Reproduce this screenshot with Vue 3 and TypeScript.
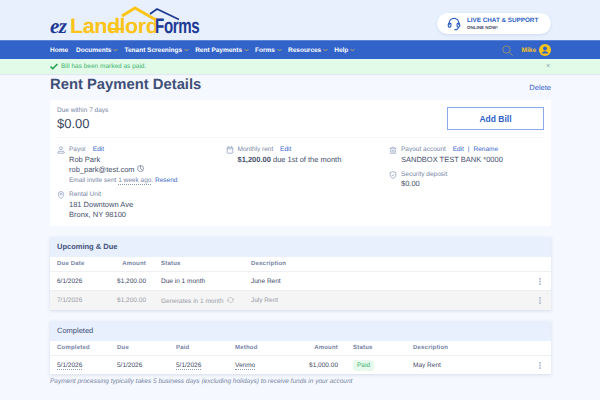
<script setup lang="ts">
const navItems = [
  { label: 'Home', caret: false },
  { label: 'Documents', caret: true },
  { label: 'Tenant Screenings', caret: true },
  { label: 'Rent Payments', caret: true },
  { label: 'Forms', caret: true },
  { label: 'Resources', caret: true },
  { label: 'Help', caret: true },
]
</script>

<template>
  <div class="page">
    <header class="top">
      <div class="logo">
        <svg class="roof" width="60" height="16" viewBox="0 0 60 16">
          <path d="M1 10 L14 2 L35 14" fill="none" stroke="#fcc419" stroke-width="3" />
          <path d="M29 8 L36 3 L58 13.500" fill="none" stroke="#1d3a94" stroke-width="1.800" />
        </svg>
        <i class="key" />
        <span class="ez">ez</span>
        <span class="landlord">Landlord</span>
        <span class="forms">Forms</span>
      </div>
      <div class="chat">
        <svg width="14" height="14" viewBox="0 0 16 16" fill="none" stroke="#2d5fc4" stroke-width="1.300">
          <path d="M2.500 9V7a5.500 5.500 0 0 1 11 0v2" />
          <rect x="1.500" y="7" width="3" height="4.600" rx="1.300" />
          <rect x="11.500" y="7" width="3" height="4.600" rx="1.300" />
          <path d="M13 11.600c0 1.900-1.500 2.900-4.500 2.900" />
        </svg>
        <div>
          <div class="chat-main">LIVE CHAT &amp; SUPPORT</div>
          <div class="chat-sub">ONLINE NOW!</div>
        </div>
      </div>
    </header>

    <nav class="nav">
      <a v-for="item in navItems" :key="item.label" class="nav-item">
        {{ item.label }}
        <svg v-if="item.caret" width="5" height="4" viewBox="0 0 5 4" fill="none" stroke="#d6b94a" stroke-width=".8"><path d="M.5 1l2 2 2-2" /></svg>
      </a>
      <div class="nav-right">
        <svg class="search" width="11" height="11" viewBox="0 0 11 11" fill="none" stroke="#b9a35c" stroke-width=".7">
          <circle cx="4.500" cy="4.500" r="3.700" /><path d="M7.200 7.200l3.400 3.400" />
        </svg>
        <span class="user">Mike</span>
        <svg width="12" height="12" viewBox="0 0 12 12">
          <circle cx="6" cy="6" r="6" fill="#fcc419" />
          <circle cx="6" cy="4.500" r="2" fill="#3263c9" />
          <path d="M2.600 9.600c.6-1.800 2-2.400 3.400-2.400s2.800.6 3.400 2.400z" fill="#3263c9" />
        </svg>
      </div>
    </nav>

    <div class="alert">
      <svg width="8" height="7" viewBox="0 0 8 7" fill="none" stroke="#1f9d4d" stroke-width="1.500"><path d="M.6 3.600l2.200 2.200L7.400 1" /></svg>
      <span>Bill has been marked as paid.</span>
      <span class="alert-close">×</span>
    </div>

    <main class="main">
      <div class="title-row">
        <h1>Rent Payment Details</h1>
        <a class="link delete">Delete</a>
      </div>

      <section class="card">
        <div class="card-top">
          <div>
            <div class="label">Due within 7 days</div>
            <div class="amount">$0.00</div>
          </div>
          <button class="add-bill">Add Bill</button>
        </div>
        <div class="info">
          <div class="col col-a">
            <div class="info-block">
              <svg class="ico" viewBox="0 0 10 10" fill="none" stroke="#7d8db5" stroke-width=".8">
                <circle cx="5" cy="2.800" r="1.800" /><path d="M1 9V7.800c0-.8.6-1.200 1.400-1.200h5.200c.8 0 1.400.4 1.400 1.200V9z" />
              </svg>
              <div>
                <div class="label">Payor <a class="link edit">Edit</a></div>
                <div class="val">Rob Park</div>
                <div class="val">rob_park@test.com
                  <svg width="7" height="7" viewBox="0 0 7 7" fill="none" stroke="#6b7690" stroke-width=".7"><circle cx="3.500" cy="3.500" r="3" /><path d="M3.500.5v3l2.200 2" /></svg>
                </div>
                <div class="label invite">Email invite sent <span class="dotted">1 week ago</span>. <a class="link">Resend</a></div>
              </div>
            </div>
            <div class="info-block">
              <svg class="ico" viewBox="0 0 10 10" fill="none" stroke="#7d8db5" stroke-width=".8">
                <path d="M5 9.500C3 7.600 1.600 6 1.600 4.100a3.400 3.400 0 0 1 6.800 0C8.400 6 7 7.600 5 9.500z" /><circle cx="5" cy="4" r="1.200" />
              </svg>
              <div>
                <div class="label">Rental Unit</div>
                <div class="val">181 Downtown Ave</div>
                <div class="val">Bronx, NY 98100</div>
              </div>
            </div>
          </div>
          <div class="col col-b">
            <div class="info-block">
              <svg class="ico" viewBox="0 0 10 10" fill="none" stroke="#7d8db5" stroke-width=".8">
                <rect x="1.500" y="1.500" width="7" height="7.500" rx=".8" /><path d="M1.500 3.500h7M3.200.5v1.500M6.800.5v1.500" />
              </svg>
              <div>
                <div class="label">Monthly rent <a class="link edit">Edit</a></div>
                <div class="val"><b>$1,200.00</b> due 1st of the month</div>
              </div>
            </div>
          </div>
          <div class="col col-c">
            <div class="info-block">
              <svg class="ico" viewBox="0 0 10 10" fill="none" stroke="#7d8db5" stroke-width=".8">
                <path d="M1 3.500L5 1l4 2.500zM2 5v3M4 5v3M6 5v3M8 5v3M1 9h8" />
              </svg>
              <div>
                <div class="label">Payout account <a class="link edit">Edit</a><span class="sep">|</span><a class="link">Rename</a></div>
                <div class="val">SANDBOX TEST BANK *0000</div>
              </div>
            </div>
            <div class="info-block">
              <svg class="ico" viewBox="0 0 10 10" fill="none" stroke="#7d8db5" stroke-width=".8">
                <path d="M5 .8l3.600 1.200v3c0 2-1.600 3.400-3.600 4.200C3 8.400 1.400 7 1.400 5V2z" /><path d="M3.400 5l1.200 1.200 2-2.200" />
              </svg>
              <div>
                <div class="label">Security deposit</div>
                <div class="val">$0.00</div>
              </div>
            </div>
          </div>
        </div>
      </section>

      <section class="panel">
        <div class="panel-title strong">Upcoming &amp; Due</div>
        <div class="row head due-grid">
          <span>Due Date</span><span class="r">Amount</span><span class="gap">Status</span><span>Description</span><span />
        </div>
        <div class="row body due-grid">
          <span>6/1/2026</span><span class="r">$1,200.00</span><span class="gap">Due in 1 month</span><span>June Rent</span>
          <svg class="dots" viewBox="0 0 2 8"><rect width="2" height="2" /><rect y="3" width="2" height="2" /><rect y="6" width="2" height="2" /></svg>
        </div>
        <div class="row body muted due-grid">
          <span>7/1/2026</span><span class="r">$1,200.00</span>
          <span class="gap">Generates in 1 month
            <svg class="cycle" width="7" height="6" viewBox="0 0 8 7" fill="none" stroke="#b0b0b0" stroke-width=".7"><path d="M1 3.200A2.800 2.800 0 0 1 6.200 2L7 3M5.800 3.200H7.400V1.400M7 3.800A2.800 2.800 0 0 1 1.800 5L1 4M2.200 3.800H.6v1.800" /></svg>
          </span>
          <span>July Rent</span>
          <svg class="dots" viewBox="0 0 2 8"><rect width="2" height="2" /><rect y="3" width="2" height="2" /><rect y="6" width="2" height="2" /></svg>
        </div>
      </section>

      <section class="panel second">
        <div class="panel-title">Completed</div>
        <div class="row head done-grid">
          <span>Completed</span><span>Due</span><span>Paid</span><span>Method</span><span class="r">Amount</span><span class="gap">Status</span><span>Description</span><span />
        </div>
        <div class="row body done-grid">
          <span><i class="dotted">5/1/2026</i></span><span>5/1/2026</span><span><i class="dotted">5/1/2026</i></span><span><i class="dotted">Venmo</i></span>
          <span class="r">$1,000.00</span><span class="gap"><em class="paid">Paid</em></span><span>May Rent</span>
          <svg class="dots" viewBox="0 0 2 8"><rect width="2" height="2" /><rect y="3" width="2" height="2" /><rect y="6" width="2" height="2" /></svg>
        </div>
      </section>
      <p class="note">Payment processing typically takes 5 business days (excluding holidays) to receive funds in your account</p>
    </main>
  </div>
</template>

<style scoped>
.page {
  width: 600px;
  height: 400px;
  overflow: hidden;
  background: #f5f8fe;
  font-family: "Liberation Sans", Arial, sans-serif;
  color: #3f4a68;
  font-size: 7.500px;
  text-rendering: geometricPrecision;
}
.top {
  height: 40px;
  box-sizing: border-box;
  background: #e8f0fd;
  display: flex;
  justify-content: space-between;
  align-items: flex-start;
  padding: 13px 49px 0 50px;
}
.logo {
  position: relative;
  display: flex;
  align-items: baseline;
  height: 22px;
  margin-top: 2px;
  font-weight: 700;
  font-size: 21px;
  line-height: 22px;
  letter-spacing: -0.500px;
}
.roof {
  position: absolute;
  left: 71px;
  top: -9px;
}
.key {
  position: absolute;
  left: 59px;
  top: 13px;
  width: 15px;
  height: 1.500px;
  background: #fcc419;
}
.ez {
  font-family: "Liberation Serif", serif;
  font-style: italic;
  color: #1d3a94;
  font-size: 21px;
  width: 20px;
}
.landlord {
  color: #fcc419;
  width: 85px;
  display: inline-block;
  transform: scaleX(1.03);
  transform-origin: left;
  white-space: nowrap;
}
.forms {
  color: #1d3a94;
  width: 44px;
  display: inline-block;
  transform: scaleX(.72);
  transform-origin: left;
}
.chat {
  width: 114px;
  height: 21px;
  box-sizing: border-box;
  background: #fff;
  border-radius: 11px;
  box-shadow: 0 1px 3px rgba(60, 90, 160, .15);
  display: flex;
  align-items: center;
  gap: 6px;
  padding-left: 10px;
}
.chat-main { color: #2d5fc4; font-size: 6.300px; font-weight: 700; }
.chat-sub { color: #3f4a68; font-size: 4.500px; font-weight: 700; margin-top: 1px; }
.nav {
  height: 19px;
  background: #3263c9;
  border-top: 1px solid #5c85d8;
  box-sizing: border-box;
  display: flex;
  align-items: center;
  padding: 0 49px 0 50px;
  gap: 6px;
  color: #fff;
  font-size: 6.500px;
  font-weight: 700;
}
.nav-item { display: flex; align-items: center; gap: 2px; white-space: nowrap; }
.nav-item:first-child { margin-right: 2px; }
.nav-right { margin-left: auto; display: flex; align-items: center; }
.search { margin-right: 9px; }
.user { color: #fcc419; margin-right: 3px; }
.alert {
  height: 15px;
  background: #e2fbe9;
  display: flex;
  align-items: center;
  padding: 0 50px;
  gap: 3px;
  color: #3cb56b;
  font-size: 6.500px;
  box-shadow: 0 1px 1px rgba(80, 100, 140, .1);
}
.alert-close { margin-left: auto; color: #8aa0a8; font-size: 7px; }
.main { padding: 0 49px 0 50px; }
.title-row {
  display: flex;
  justify-content: space-between;
  align-items: flex-start;
  height: 26px;
}
h1 {
  margin: 0;
  font-size: 14.800px;
  line-height: 22px;
  color: #3f4f78;
}
.link { color: #3a67cc; }
.delete { font-size: 7.500px; margin-top: 9px; }
.card {
  background: #fff;
  height: 126px;
  box-sizing: border-box;
  padding: 0 7px;
}
.card-top {
  height: 31px;
  border-bottom: 1px solid #f3f5f9;
  display: flex;
  justify-content: space-between;
  padding-top: 6px;
}
.label { color: #7785a5; font-size: 6.500px; line-height: 9px; }
.label + .val { margin-top: .5px; }
.amount { font-size: 13px; line-height: 17px; color: #3a4663; }
.add-bill {
  width: 97px;
  height: 23px;
  margin-top: 1px;
  background: #fff;
  border: 1px solid #8aa8ea;
  color: #2f5fc8;
  font: 700 8.500px "Liberation Sans", sans-serif;
  padding: 0;
}
.info { display: flex; padding-top: 7px; }
.col { display: flex; flex-direction: column; gap: 5px; }
.col-a { width: 168.500px; }
.col-b { width: 163.500px; }
.info-block { display: flex; gap: 4px; }
.ico { width: 8px; height: 8px; flex: none; margin-top: 1px; }
.val { font-size: 7.500px; line-height: 10.300px; color: #454f6b; white-space: nowrap; }
.edit { margin-left: 5px; }
.sep { margin: 0 4px; color: #3a67cc; }
.invite { margin-top: 1px; white-space: nowrap; }
.dotted { border-bottom: 1px dotted #8a96b5; font-style: normal; }
.panel {
  margin-top: 11px;
  background: #fff;
  box-shadow: 0 1px 3px rgba(70, 90, 140, .18);
}
.panel-title {
  height: 20px;
  line-height: 20px;
  background: #e8f0fe;
  padding-left: 7px;
  font-size: 7.500px;
  color: #3f4f78;
}
.panel-title.strong { font-weight: 700; }
.row {
  display: grid;
  align-items: center;
  padding-left: 7px;
  white-space: nowrap;
}
.row.head {
  height: 14px;
  font-size: 6px;
  font-weight: 700;
  letter-spacing: .2px;
  color: #7785a5;
  border-bottom: 1px solid #eef0f4;
}
.row.body {
  height: 18px;
  font-size: 6.500px;
  color: #3f4a68;
  border-bottom: 1px solid #eef0f4;
}
.row.body.muted { background: #f5f5f5; color: #989ca6; border-bottom: 0; height: 19px; }
.due-grid { grid-template-columns: 50px 39px 105px 1fr 12px; }
.done-grid { grid-template-columns: 60px 59px 59px 103px 0 75px 1fr 12px; }
.done-grid > .r { justify-self: end; }
.gap { padding-left: 15px; }
.r { text-align: right; }
.dots { width: 2px; height: 7px; fill: #b4bdd4; }
.cycle { margin-left: 2px; }
.paid {
  font-style: normal;
  background: #e8f9ee;
  color: #3cb56b;
  padding: 2px 4px;
  border-radius: 3px;
  font-size: 6.500px;
}
.note {
  margin: 4px 0 0;
  font-size: 6.500px;
  font-style: italic;
  color: #7785a5;
}
.panel.second .row.body { border-bottom: 0; }
</style>
